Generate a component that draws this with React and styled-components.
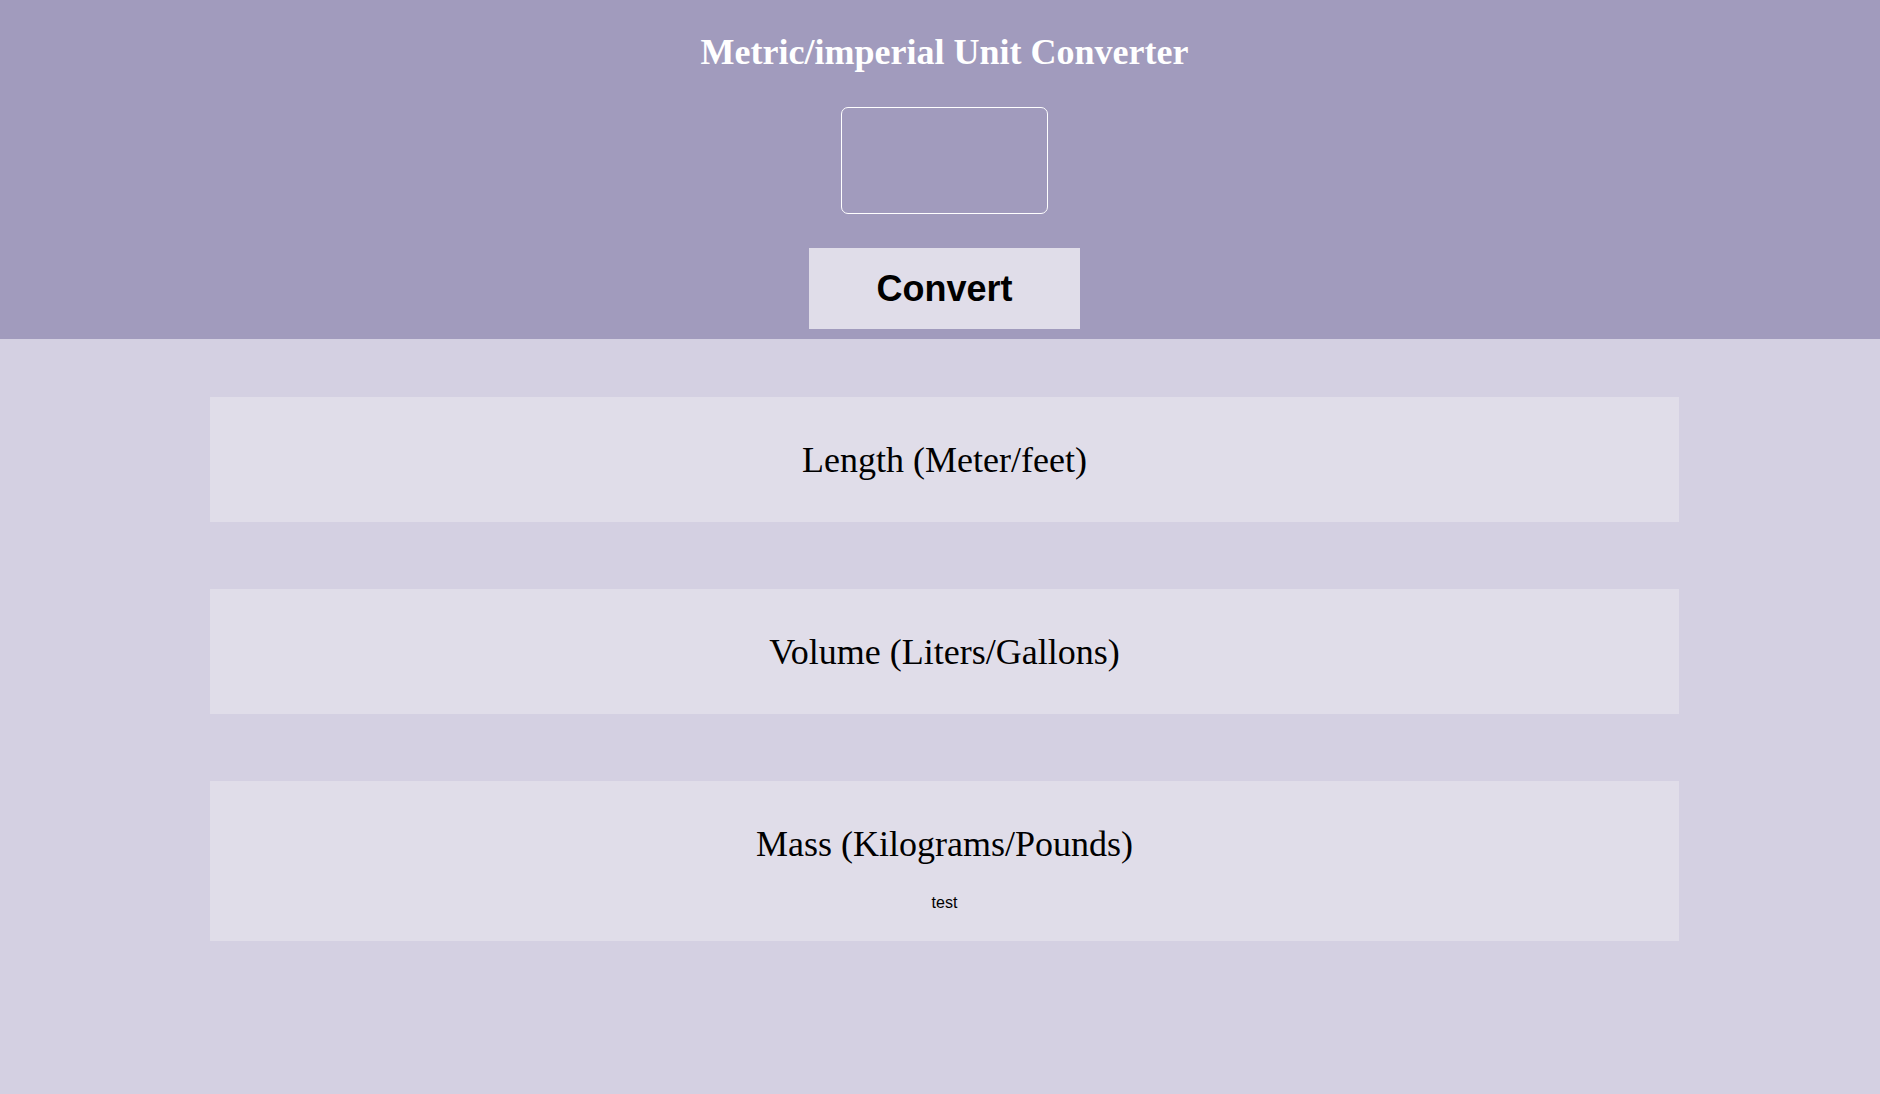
import React from "react";
import styled, { createGlobalStyle } from "styled-components";

const GlobalStyle = createGlobalStyle`
  html, body {
    margin: 0;
    padding: 0;
    background: #d4d0e2;
    min-height: 100vh;
  }
  * {
    box-sizing: border-box;
  }
`;

const conversions = [
  { title: "Length (Meter/feet)" },
  { title: "Volume (Liters/Gallons)" },
  { title: "Mass (Kilograms/Pounds)", result: "test" },
];

const App = () => {
  return (
    <>
      <GlobalStyle />
      <Page>
        <Header>
          <Title>Metric/imperial Unit Converter</Title>
          <NumberInput type="text" aria-label="value" />
          <ConvertButton>Convert</ConvertButton>
        </Header>
        <Results>
          {conversions.map((c) => (
            <Card key={c.title}>
              <CardTitle>{c.title}</CardTitle>
              {c.result && <CardText>{c.result}</CardText>}
            </Card>
          ))}
        </Results>
      </Page>
    </>
  );
};

const Page = styled.main`
  min-height: 100vh;
  background: #d4d0e2;
`;

const Header = styled.header`
  background: #a19bbd;
  display: flex;
  flex-direction: column;
  align-items: center;
  padding: 31px 0 10px 9px;
`;

const Title = styled.h1`
  margin: 0;
  font-family: "Liberation Serif", "Times New Roman", serif;
  font-size: 36px;
  font-weight: bold;
  color: #ffffff;
`;

const NumberInput = styled.input`
  margin-top: 34px;
  width: 207px;
  height: 107px;
  background: transparent;
  border: 1px solid #ffffff;
  border-radius: 7px;
  outline: none;
  font-size: 24px;
  color: #ffffff;
  text-align: center;
`;

const ConvertButton = styled.button`
  margin-top: 34px;
  width: 271px;
  height: 81px;
  border: none;
  background: #e0dde9;
  font-family: "Liberation Sans", Arial, sans-serif;
  font-size: 36px;
  font-weight: bold;
  color: #000000;
  cursor: pointer;
`;

const Results = styled.section`
  display: flex;
  flex-direction: column;
  gap: 67px;
  padding: 58px 201px 60px 210px;
`;

const Card = styled.div`
  background: #e0dde9;
  padding: 12px 0;
  text-align: center;
`;

const CardTitle = styled.h2`
  margin: 29.5px 0;
  font-family: "Liberation Serif", "Times New Roman", serif;
  font-size: 36px;
  font-weight: normal;
  color: #000000;
`;

const CardText = styled.p`
  margin: 7px 0 17px;
  font-family: "Liberation Sans", Arial, sans-serif;
  font-size: 16px;
  color: #000000;
`;

export default App;
